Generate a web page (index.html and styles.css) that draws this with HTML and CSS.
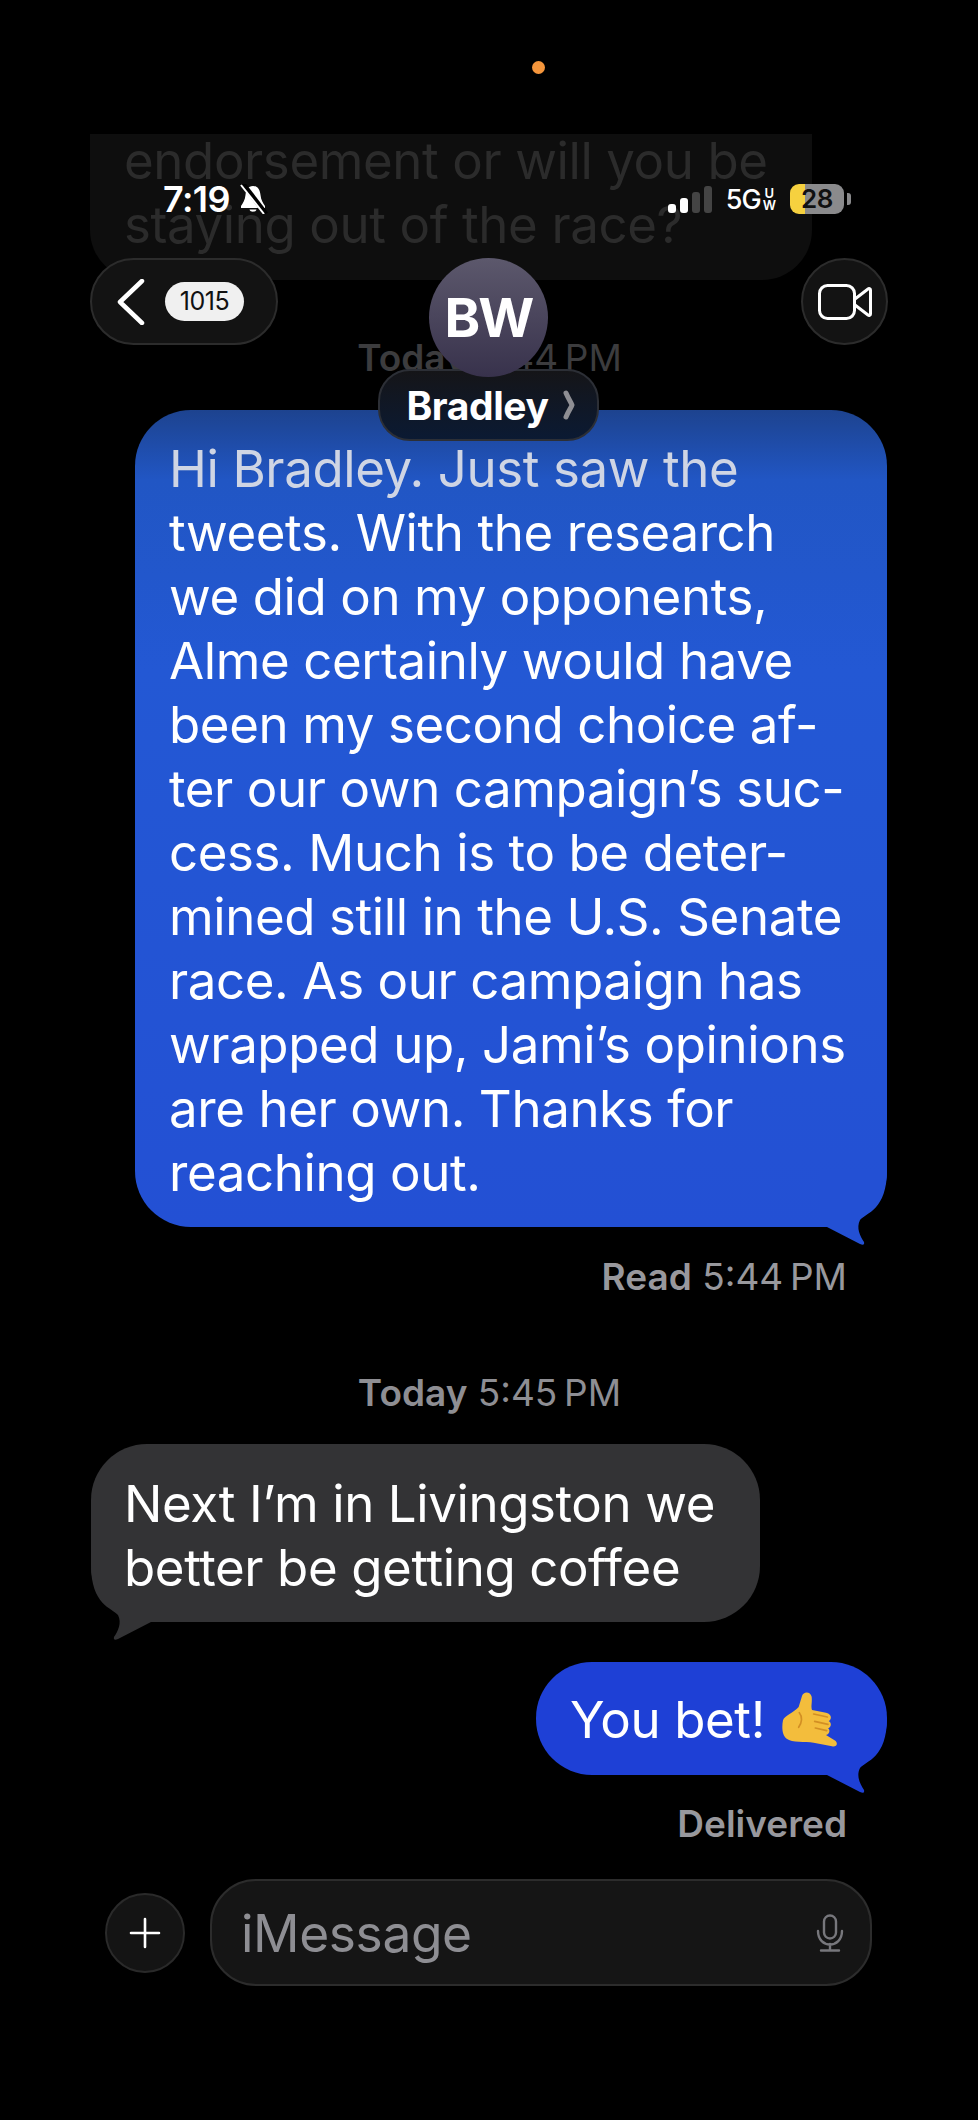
FILE: index.html
```html
<!DOCTYPE html>
<html lang="en">
  <head>
    <meta charset="UTF-8" />
    <meta name="viewport" content="width=device-width, initial-scale=1.0" />
    <title>Bradley</title>
    <link rel="stylesheet" href="styles.css">
  </head>
  <body>
    <div class="screen">
      <div class="thread">
        <div class="old-bubble">
          <p>endorsement or will you be<br>staying out of the race?</p>
        </div>
        <p class="stamp stamp-dim"><b>Today</b> 5:44&#8201;PM</p>

        <div class="bubble bubble-out bubble-long">
          <span class="first-line">Hi Bradley. Just saw the</span><br>
          tweets. With the research<br>
          we did on my opponents,<br>
          Alme certainly would have<br>
          been my second choice af-<br>
          ter our own campaign’s suc-<br>
          cess. Much is to be deter-<br>
          mined still in the U.S. Senate<br>
          race. As our campaign has<br>
          wrapped up, Jami’s opinions<br>
          are her own. Thanks for<br>
          reaching out.
          <svg class="tail" viewBox="0 0 70 80"><path d="M0 57 L7 57 L40 74 Q45 76 44 72 C40 66 36 58 40 50 C46 43 67 40 67 0 L0 0 Z" /></svg>
        </div>
        <p class="meta meta-read"><b>Read</b> 5:44&#8201;PM</p>

        <p class="stamp stamp-second"><b>Today</b> 5:45&#8201;PM</p>

        <div class="bubble bubble-in">
          Next I’m in Livingston we<br>
          better be getting coffee
          <svg class="tail tail-left" viewBox="0 0 70 80"><path d="M0 57 L7 57 L40 74 Q45 76 44 72 C40 66 36 58 40 50 C46 43 67 40 67 0 L0 0 Z" /></svg>
        </div>

        <div class="bubble bubble-out bubble-short">
          You bet!
          <svg class="hand" viewBox="0 0 165 165">
            <path fill="#f3bd3c" d="M3 85 C8 70 35 62 50 45 L60 12 C64 -3 86 -2 89 14 C91 32 86 42 90 54 L132 62 C150 66 150 82 140 87 C150 92 148 106 138 109 C146 114 142 128 132 129 L160 146 C170 156 162 166 150 163 L95 152 C70 148 30 152 14 140 C0 130 -1 105 3 85 Z" />
            <path fill="none" stroke="#d28f24" stroke-width="5" stroke-linecap="round" d="M95 66 L136 75 M98 88 L138 97 M100 108 L134 116 M52 62 C62 74 60 92 50 106" />
          </svg>
          <svg class="tail" viewBox="0 0 70 80"><path d="M0 57 L7 57 L40 74 Q45 76 44 72 C40 66 36 58 40 50 C46 43 67 40 67 0 L0 0 Z" /></svg>
        </div>
        <p class="meta meta-delivered"><b>Delivered</b></p>

        <div class="composer">
          <div class="plus-btn">
            <svg viewBox="0 0 32 32" width="32" height="32"><path d="M16 2 V30 M2 16 H30" stroke="#fff" stroke-width="2.6" stroke-linecap="round" /></svg>
          </div>
          <div class="field">
            <span>iMessage</span>
            <svg class="mic" viewBox="0 0 28 38" width="28" height="38" fill="none" stroke="#77777c" stroke-width="2.4" stroke-linecap="round">
              <rect x="8" y="1.5" width="12" height="23" rx="6" />
              <path d="M2 17 C2 35 26 35 26 17 M14 30 V36.5 M5 36.5 H23" />
            </svg>
          </div>
        </div>
      </div>

      <div class="top-overlay">
        <div class="camera-dot"></div>
        <div class="status-bar">
          <div class="status-left">
            <span class="clock">7:19</span>
            <svg class="bell" viewBox="0 0 30 30" width="30" height="30">
              <path fill="#fff" d="M15 2 C10 2 8 6 7.500 11 C7 16 5 19 3 22 L3 24 L27 24 L27 22 C25 19 23 16 22.500 11 C22 6 20 2 15 2 Z M11.500 25.500 C12 28.500 18 28.500 18.500 25.500 Z" />
              <path stroke="#000" stroke-width="5" d="M5 0 L28 30" />
              <path stroke="#fff" stroke-width="2" d="M3 1 L26 30" />
            </svg>
          </div>
          <div class="status-right">
            <div class="signal">
              <i class="bar-one"></i><i class="bar-two"></i><i class="bar-three"></i><i class="bar-four"></i>
            </div>
            <div class="network">5G<small>U<br>W</small></div>
            <div class="battery"><div class="battery-body">28</div><div class="battery-cap"></div></div>
          </div>
        </div>

        <div class="nav-bar">
          <div class="back-pill">
            <svg viewBox="0 0 28 46" width="28" height="46"><path d="M25 2 L3 23 L25 44" fill="none" stroke="#fff" stroke-width="4.500" stroke-linecap="round" stroke-linejoin="round" /></svg>
            <span class="count">1015</span>
          </div>
          <div class="contact">
            <div class="avatar">BW</div>
            <div class="name-pill">Bradley
              <svg class="name-chevron" viewBox="0 0 12 30" width="12" height="30"><path d="M3 3 C6 10 8 12 9 15 C8 18 6 20 3 27" fill="none" stroke="#8e8e93" stroke-width="5" stroke-linecap="round" stroke-linejoin="round" /></svg>
            </div>
          </div>
          <div class="video-btn">
            <svg viewBox="0 0 54 36" width="54" height="36" fill="none" stroke="#fff" stroke-width="3">
              <rect x="1.500" y="1.500" width="35" height="33" rx="8" />
              <path d="M37 15 L50 5 C51 4 52.500 4.500 52.500 6 V30 C52.500 31.500 51 32 50 31 L37 21" stroke-linejoin="round" />
            </svg>
          </div>
        </div>
      </div>
    </div>
  </body>
</html>
```

FILE: styles.css
```css
* {
  box-sizing: border-box;
}
body {
  margin: 0;
  background-color: #000;
  font-family: "Inter", "Liberation Sans", sans-serif;
}
p {
  margin: 0;
}
.screen {
  position: relative;
  width: 978px;
  height: 2120px;
  overflow: hidden;
  background-color: #000;
}
.thread {
  display: flex;
  flex-direction: column;
  padding: 134px 91px 0 91px;
  font-size: 51px;
  line-height: 64px;
  letter-spacing: -0.4px;
  color: #fff;
}

/* scrolled away message under the status bar */
.old-bubble {
  display: flex;
  align-items: flex-end;
  width: 722px;
  height: 146px;
  padding: 0 34px 23px;
  margin-left: -1px;
  overflow: hidden;
  color: #2b2b2b;
  background-color: #0e0e0e;
  border-radius: 0 0 50px 50px;
}

.stamp {
  font-size: 37px;
  line-height: 44px;
  letter-spacing: 0;
  text-align: center;
  color: #8e8e93;
  font-weight: 400;
  padding-left: 1px;
}
.stamp b,
.meta b {
  font-weight: 600;
}
.stamp-dim {
  margin-top: 56px;
  color: #3c3c3e;
}
.stamp-second {
  margin-top: 72px;
}
.meta {
  font-size: 37px;
  line-height: 44px;
  letter-spacing: 0;
  text-align: right;
  color: #98989d;
  padding-right: 40px;
}
.meta-read {
  margin-top: 28px;
}
.meta-delivered {
  margin-top: 27px;
}

.bubble {
  position: relative;
  z-index: 0;
  border-radius: 56px;
}
.bubble-out {
  align-self: flex-end;
  color: #fff;
  background-color: #1e40d6;
}
.bubble-long {
  width: 752px;
  height: 817px;
  margin-top: 30px;
  padding: 27px 20px 22px 34px;
  background: linear-gradient(#1d438f 0, #2156c4 70px, #2358d4 260px, #2350d4 100%);
}
.bubble-long .tail {
  fill: #2350d4;
}
.first-line {
  color: #cfd5e4;
}
.bubble-in {
  align-self: flex-start;
  margin-top: 29px;
  width: 669px;
  height: 178px;
  padding: 28px 20px 22px 33px;
  background-color: #333335;
}
.bubble-short {
  display: flex;
  align-items: flex-start;
  gap: 17px;
  width: 351px;
  height: 113px;
  margin-top: 40px;
  padding: 26px 20px 23px 34px;
}
.tail {
  position: absolute;
  z-index: -1;
  right: -3px;
  bottom: -23px;
  width: 70px;
  height: 80px;
  fill: #1e40d6;
}
.tail-left {
  right: auto;
  left: -3px;
  transform: scaleX(-1);
  fill: #333335;
}
.hand {
  width: 55px;
  height: 55px;
  margin-top: 4px;
}

.composer {
  display: flex;
  align-items: center;
  gap: 25px;
  margin-top: 33px;
  margin-left: 14px;
  margin-right: 15px;
}
.plus-btn {
  display: flex;
  align-items: center;
  justify-content: center;
  flex: none;
  width: 80px;
  height: 80px;
  background-color: #141414;
  border: 2px solid #2a2a2a;
  border-radius: 50%;
}
.field {
  display: flex;
  flex: 1;
  align-items: center;
  justify-content: space-between;
  height: 107px;
  padding: 0 26px 0 29px;
  font-size: 51.5px;
  color: #8e8e93;
  background-color: #151515;
  border: 2px solid #2c2c2c;
  border-radius: 46px;
}
.mic {
  flex: none;
}

/* status bar and nav float on top of the thread */
.top-overlay {
  position: absolute;
  top: 0;
  left: 0;
  width: 100%;
}
.camera-dot {
  width: 13px;
  height: 13px;
  margin: 61px 0 0 532px;
  background-color: #f5963c;
  border-radius: 50%;
}
.status-bar {
  display: flex;
  justify-content: space-between;
  align-items: center;
  height: 40px;
  margin-top: 105px;
  padding: 0 127px 0 163px;
}
.status-left,
.status-right {
  display: flex;
  align-items: center;
}
.clock {
  font-size: 36px;
  font-weight: 600;
  letter-spacing: -0.6px;
  color: #fff;
}
.bell {
  margin-left: 8px;
}
.status-right {
  gap: 14px;
}
.signal {
  display: flex;
  align-items: flex-end;
  gap: 4px;
  height: 27px;
}
.signal i {
  display: block;
  width: 8px;
  border-radius: 3px;
  background-color: #fff;
}
.bar-one {
  height: 9px;
}
.bar-two {
  height: 15px;
}
.signal .bar-three {
  height: 21px;
  background-color: #444;
}
.signal .bar-four {
  height: 27px;
  background-color: #444;
}
.network {
  display: flex;
  align-items: center;
  font-size: 27px;
  font-weight: 500;
  letter-spacing: -1px;
  color: #fff;
}
.network small {
  margin-left: 2px;
  font-size: 13px;
  line-height: 12px;
  font-weight: 600;
  letter-spacing: 0;
  text-align: center;
}
.battery {
  display: flex;
  align-items: center;
  gap: 3px;
}
.battery-body {
  width: 54px;
  height: 30px;
  font-size: 26px;
  line-height: 30px;
  font-weight: 600;
  letter-spacing: -0.5px;
  text-align: center;
  color: #111;
  background: linear-gradient(90deg, #f6d13f 0, #f6d13f 15px, #8a8a8c 15px);
  border-radius: 9px;
}
.battery-cap {
  width: 4px;
  height: 12px;
  background-color: #8a8a8c;
  border-radius: 0 3px 3px 0;
}

.nav-bar {
  position: relative;
  display: flex;
  justify-content: space-between;
  height: 87px;
  margin-top: 39px;
  padding: 0 90px;
}
.back-pill {
  display: flex;
  align-items: center;
  gap: 20px;
  width: 188px;
  height: 87px;
  padding-left: 25px;
  background-color: #131313;
  border: 2px solid #2c2c2c;
  border-radius: 44px;
}
.count {
  width: 79px;
  height: 39px;
  font-size: 25px;
  line-height: 39px;
  letter-spacing: -0.5px;
  text-align: center;
  color: #111;
  background-color: #f0f0f0;
  border-radius: 20px;
}
.video-btn {
  display: flex;
  align-items: center;
  justify-content: center;
  width: 87px;
  height: 87px;
  background-color: #131313;
  border: 2px solid #2c2c2c;
  border-radius: 50%;
}
.contact {
  position: absolute;
  top: 0;
  left: 378px;
  display: flex;
  flex-direction: column;
  align-items: center;
  width: 221px;
}
.avatar {
  position: relative;
  z-index: 1;
  width: 119px;
  height: 119px;
  font-size: 54px;
  line-height: 119px;
  font-weight: 700;
  letter-spacing: -2px;
  text-align: center;
  color: #fff;
  background: linear-gradient(#5c586c, #38324c);
  border-radius: 50%;
}
.name-pill {
  display: flex;
  align-items: center;
  justify-content: center;
  gap: 14px;
  width: 221px;
  height: 72px;
  margin-top: -8px;
  padding-left: 4px;
  font-size: 39px;
  font-weight: 700;
  letter-spacing: -0.4px;
  color: #fff;
  background: linear-gradient(#151518, #0b1a33);
  border: 2px solid #2c2f36;
  border-radius: 32px;
}
.name-chevron {
  flex: none;
}
```
